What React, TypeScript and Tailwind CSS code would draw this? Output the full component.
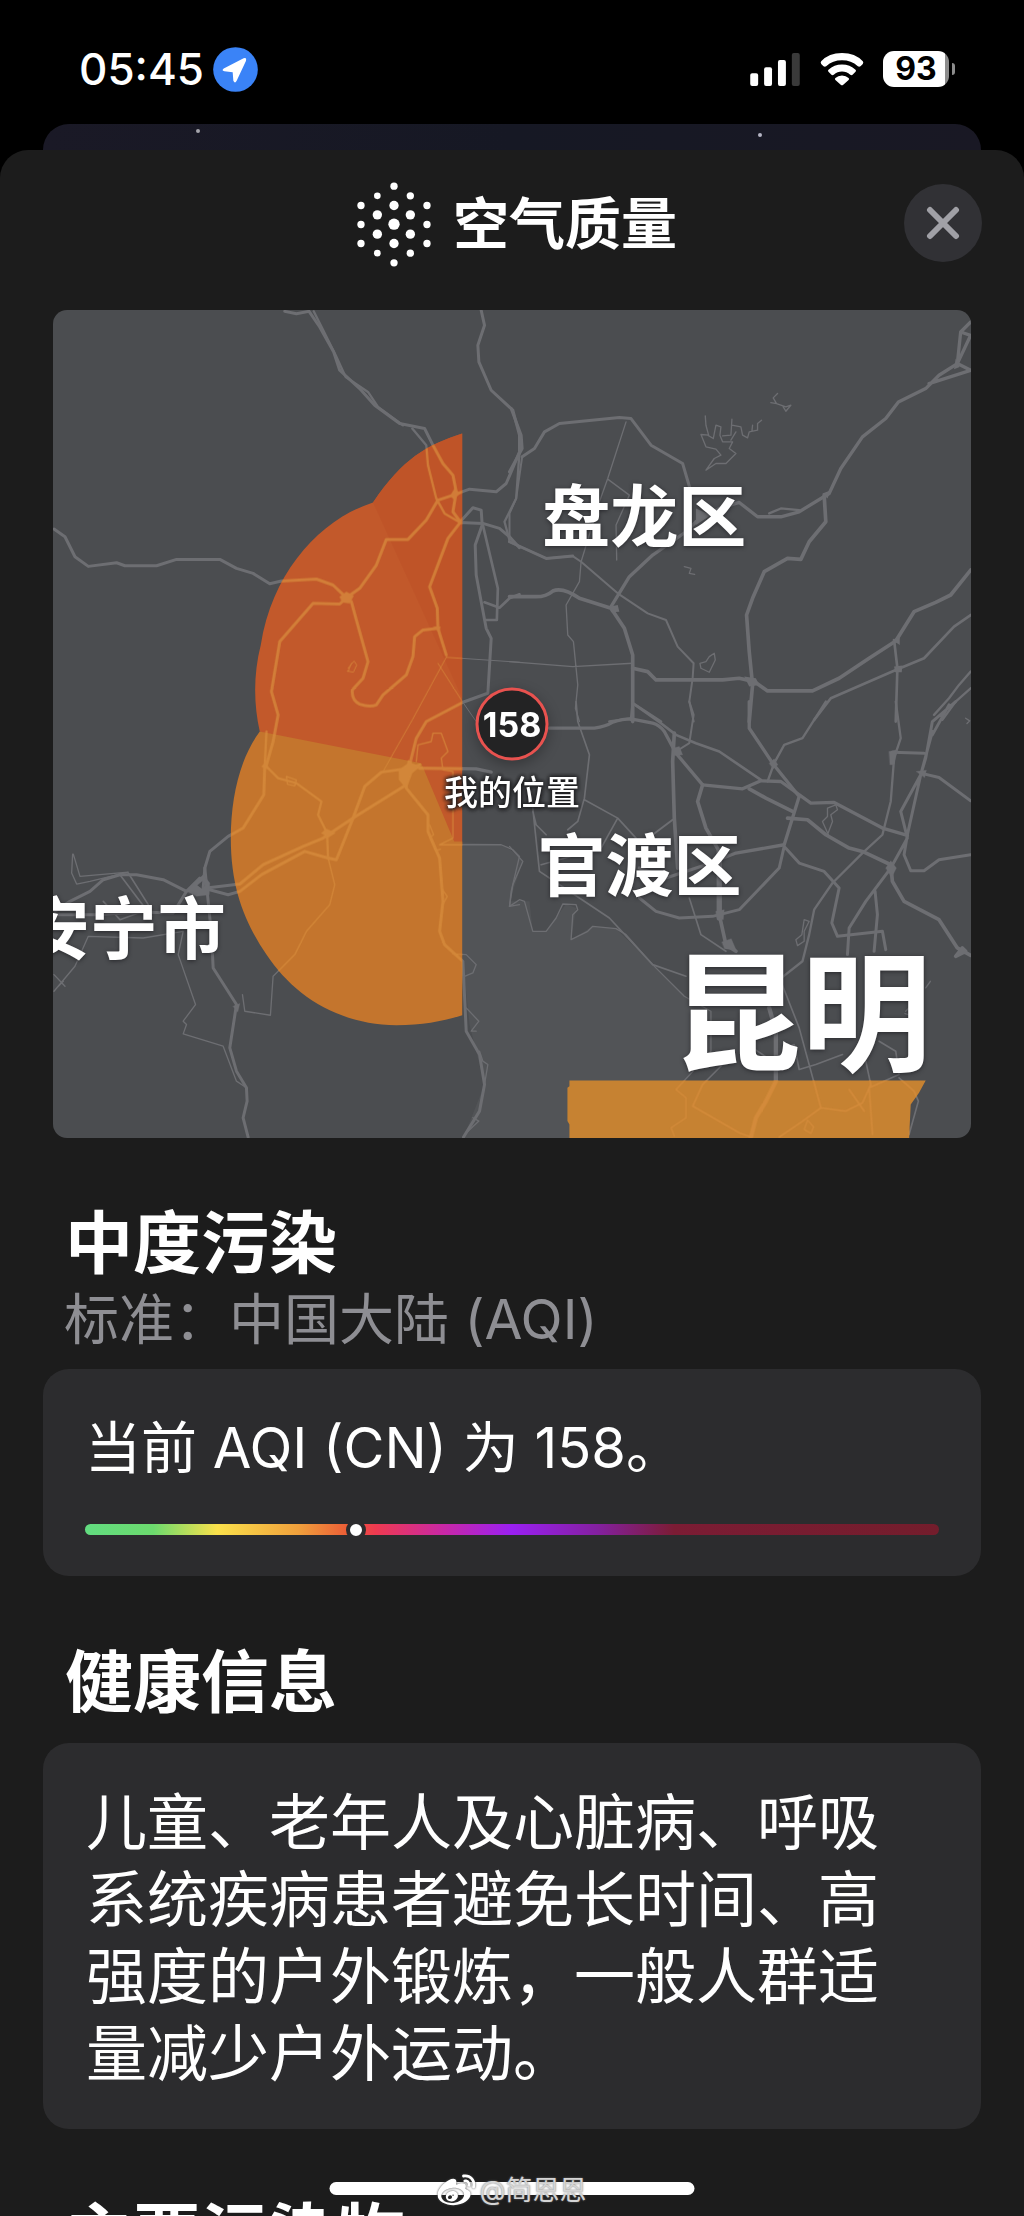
import React from "react";
import { FaWeibo } from "react-icons/fa";

/* Roads are grouped by map tile; every tile is drawn at three units per pixel. */
function Roads() {
  return (
    <g fill="none" stroke="currentColor" strokeLinejoin="round" strokeLinecap="round">
      <g>
        <g strokeWidth="9">
          <path d="M735 58L770 65L808 58L840 105L882 180L900 235L960 290L1005 340L1080 395L1155 410L1180 460L1210 515L1240 550L1250 600L1240 660L1262 690" />
          <path d="M822 58L848 110L888 190L918 255L985 300L1015 345L1090 400" strokeWidth="7" />
          <path d="M1118 410L1160 460L1165 520L1190 620L1215 665L1262 692" strokeWidth="7" />
          <path d="M1325 55L1335 100L1315 160L1318 210L1355 295L1420 355L1440 430L1440 480L1415 540L1400 575L1370 600L1290 592L1240 610L1195 625L1160 685L1105 743L1040 743L1010 820L960 890L920 918L880 880L830 862L725 868L690 876L640 845L590 830L540 803L410 803L350 822L255 822L230 813L145 824L105 795L75 735L42 712" />
          <path d="M920 918L900 937L820 935L720 1050L695 1200L715 1270L700 1350L680 1420" />
          <path d="M935 930L950 985L985 1110L970 1160L938 1195Q935 1225 960 1238Q990 1248 1010 1240L1030 1210L1100 1150L1120 1095L1125 1035L1150 1015L1195 1010L1193 950L1170 885L1225 740L1262 692L1330 695L1380 710L1410 735L1440 768" />
          <path d="M1195 1010L1220 1090" />
          <path d="M1262 690L1300 648L1325 655L1328 700L1307 760L1310 850L1325 930L1340 1010L1355 1040L1345 1205L1270 1232L1160 1290L1130 1340L1110 1420" />
          <path d="M1330 700L1375 890L1372 985L1340 985M1335 932L1380 948L1410 920L1440 908" strokeWidth="8" />
          <path d="M1440 480L1430 620L1395 690L1410 745" strokeWidth="7" />
        </g>
        <g strokeWidth="3">
          <path d="M1220 1097L1440 1112M1220 1097L1118 1285L1030 1440M1195 1115L1265 1225L1310 1290" />
          <path d="M925 1130l18 -22l8 12l-10 22l-18 -4M935 1115l-10 25" />
        </g>
        <path fill="currentColor" d="M900 915L920 900L942 912L930 935L908 932ZM1232 612L1245 590L1262 605L1242 622ZM1182 1005l20 0l-2 18Z" />
      </g>
      <g transform="translate(1410 0)">
        <g strokeWidth="11">
          <path d="M5 350L35 430L38 470L0 540M38 495L75 470L105 420L150 395L330 377L365 380L425 460L520 515L542 590" strokeWidth="9" />
          <path d="M38 495L20 620L0 665L0 750L110 800L190 793L215 810L325 905L415 965L470 985L505 1065L553 1115L550 1160L540 1230L553 1290" strokeWidth="6" />
          <path d="M0 750L110 800L190 793" strokeWidth="9" />
          <path d="M0 915L80 915Q110 915 130 898Q160 885 210 920L305 950L345 1010L370 1090L370 1290" />
          <path d="M305 945L360 855L430 790L530 720L560 690L630 650L690 632L745 675L815 675L870 660L960 605L995 530L1060 435L1130 380L1168 330L1250 290L1290 250L1345 215L1355 120L1385 90M1355 120L1385 130L1345 215L1385 235L1260 275" strokeWidth="10" />
          <path d="M780 665L815 650L870 655" strokeWidth="7" />
          <path d="M945 610L950 690L900 750L875 803L835 800L765 840L730 920L712 970L720 1080L730 1180L720 1290" />
          <path d="M370 1130L415 1140L440 1165L640 1165L690 1160L735 1170L775 1198L910 1198L990 1160L1080 1100L1160 1048L1215 960L1280 932L1325 910L1385 835" />
          <path d="M915 1285L965 1220L1160 1135L1245 1100L1335 1005L1385 970M1155 1045L1165 1130L1160 1290" strokeWidth="8" />
          <path d="M1385 1140L1350 1180L1320 1220L1275 1270M1385 1190L1340 1230L1300 1285" strokeWidth="7" />
          <path d="M370 1235L455 1290M300 1290L370 1280" strokeWidth="8" />
        </g>
        <g strokeWidth="4">
          <path d="M350 390L295 560L270 630L215 810L210 870L170 940L175 1030L192 1050L205 1180L198 1250L210 1290M295 562L360 610L320 700L322 805M0 1110L190 1125L370 1115" />
          <path d="M588 372L590 400L598 430L575 428L590 465L620 472L635 490L615 500L590 535L620 515L650 515L680 485L660 470L670 450L640 450L632 430L635 405L620 400L612 440L595 430M668 382L665 430L640 432M668 400L695 405L700 430L715 438L720 420L745 415L745 395L757 385M730 400L728 418M665 445L680 420" />
          <path d="M805 305L792 318L802 335L785 332M802 335L830 345L845 340L830 358L822 345M525 825L545 830L540 845L556 848" />
          <path d="M615 1085L618 1105L600 1142L575 1130L572 1115L590 1110L600 1095Z" />
        </g>
        <path fill="currentColor" stroke="none" d="M300 945L325 940L330 960L305 962ZM705 1155L740 1160L750 1180L720 1185ZM1155 1125L1180 1122L1178 1142L1158 1142ZM1150 1045L1172 1035L1172 1060ZM940 605L965 595L955 620ZM1340 200L1352 225L1335 232ZM560 650L605 670L560 700Z" />
      </g>
      <g transform="translate(0 1230)">
        <g strokeWidth="9">
          <path d="M680 90L675 190L715 230L770 245L845 300L835 340L862 395L865 470" strokeWidth="7" />
          <path d="M865 470L885 550L870 610L800 690L765 760L700 825L692 942L615 930L608 880" strokeWidth="4" />
          <path d="M675 190L672 280L610 380L565 405L510 450L495 500L490 560L565 580L600 570L665 520L795 450L865 470L890 475L940 350L975 255L1025 212L1110 200L1140 190" />
          <path d="M500 560L600 548L670 490L790 435L850 410L940 350L1100 250L1108 180" />
          <path d="M440 570L370 535L290 520L240 520L190 535L150 570L90 600L45 630M480 530L440 570L400 635L300 632L170 640L42 640" />
          <path d="M495 500L515 700L520 800L590 910L570 1040L590 1110L620 1160L622 1200L610 1250L625 1308" />
          <path d="M1100 200L1100 260L1165 340L1165 390L1200 470L1210 600L1200 690L1215 730L1270 780L1280 990L1320 1060L1335 1150L1320 1230L1272 1308" />
          <path d="M1140 200L1310 202L1355 212" strokeWidth="10" />
          <path d="M240 520L300 600L335 645M265 515L325 610M190 600L240 655L310 630" strokeWidth="5" />
        </g>
        <g strokeWidth="4">
          <path d="M98 458L95 515L110 548L150 540L265 512L120 525L100 458M42 870L105 795L145 705L310 710L430 690L415 760L467 910L430 960L440 970L430 998L550 1035L590 1140L620 1160M42 820L75 855M50 860L70 840" />
          <path d="M1130 180L1135 130L1175 120L1180 95L1205 95L1225 150L1205 170L1210 205L1240 210L1240 410L1200 430L1385 430L1420 445L1440 465L1415 570L1410 615L1440 610" />
          <path d="M740 225l30 10l-5 18l-22 -5zM1170 370l12 30l-12 8l18 40l15 -5M1205 560l18 25l-12 22M1240 758L1280 760L1310 790L1300 815L1275 825M1280 920L1318 960L1295 990L1310 990M1320 1050L1330 1080L1345 1090L1330 1180M1300 1250L1318 1260L1275 1300" />
        </g>
        <path fill="currentColor" d="M1078 205L1110 182L1142 195L1118 215L1100 262L1078 235ZM845 395L860 382L887 395L866 408ZM665 195L678 182L690 205ZM580 915l20 -8l-6 25Z" />
        <path fill="currentColor" fillRule="evenodd" d="M440 570L490 520L510 545L508 580L470 585ZM472 552L488 538L498 550L486 562Z" />
      </g>
      <g transform="translate(1410 1230)">
        <g strokeWidth="11">
          <path d="M120 80L255 80Q290 75 310 62Q340 52 365 52L430 65Q450 70 465 90L500 155L580 250L700 262L755 238L815 240L905 305L975 303L1120 380L1195 402" strokeWidth="10" />
          <path d="M370 5L365 55M370 5L455 65L500 100L560 125L630 150L755 235" strokeWidth="8" />
          <path d="M495 95L490 180L495 350L505 500M580 250L565 300L590 380L630 450L630 640L650 730L680 750" />
          <path d="M720 0L720 80L790 185L870 285L850 350L825 430L680 455L590 490L470 530L390 500" strokeWidth="10" />
          <path d="M630 450L630 650" strokeWidth="16" />
          <path d="M720 262L770 290L850 330M835 350L895 355L950 400L1020 440L1060 450L1145 490L1150 540L1185 600L1290 655L1345 740L1385 762M1340 765L1360 740L1370 750Z" />
          <path d="M825 435L870 485L945 510L990 560L968 665L985 705L1120 690L1130 745M825 435L810 500L690 625L610 645L510 650L440 630L390 590" strokeWidth="9" />
          <path d="M950 0L880 110L825 130L795 185L775 240M1160 0L1175 110L1155 170L1145 300L1120 400L1060 455L970 545L915 625L900 700L880 780L810 835" strokeWidth="7" />
          <path d="M1340 0L1270 60L1250 170L1235 220L1175 330L1195 410L1145 500L1070 600L1020 680L1015 760M1270 90L1235 220L1195 400L1185 460L1205 508L1245 508L1290 475L1385 460M1150 152L1245 155M1235 215L1290 228L1385 298M1098 570L1105 640L1095 750M1320 10L1270 100" strokeWidth="9" />
          <path d="M540 0L553 40L540 125L500 150M430 400L490 355" strokeWidth="6" />
          <path d="M780 920L800 990L800 1140L770 1200L740 1250L725 1308" strokeWidth="13" />
        </g>
        <g strokeWidth="5">
          <path d="M200 0L205 60L240 160L225 290L205 360L175 385M70 330L80 370L110 400M225 295L325 350L380 410M325 350L275 440L95 490M65 270L75 370L90 510L120 530L210 590L300 650L430 790L530 825M540 590L575 700L650 750" />
          <path d="M815 840L870 980L935 1220L1010 1230L1060 1205L1085 1150L1070 1080M830 1040L855 1030L870 1105L920 1090L1000 1060M730 1040L790 1080M1110 1020L1160 1050L1170 1120L1080 1160L1090 1300M550 1215L690 1295L725 1308M550 1215L580 1150L640 1090M810 1308L880 1260L935 1220M1170 1130L1215 1170L1228 1200L1200 1300M1020 1165L1065 1230" />
        </g>
        <g strokeWidth="4">
          <path d="M0 435L40 480L10 550L0 615L30 595L45 600L70 690L110 690L140 650L160 608L200 610L205 625L190 640L185 715L235 690L250 675L320 682L350 700L430 790L525 885L605 930L605 1050L570 1090L500 1165L530 1190L530 1250L485 1280L495 1305" />
          <path d="M955 320L980 310L985 325L965 340L970 360L955 400L960 405L940 360L955 345ZM885 655L900 660L885 690L885 720L865 733L860 715L878 700ZM1190 930l18 -18l-5 30l-15 -5M1250 860l14 -20M885 1285l10 -28l18 20l-8 20zM1370 50l12 8l-8 8" />
        </g>
        <path fill="currentColor" d="M780 185L795 172L806 190L792 202ZM1130 500L1145 478L1162 500L1148 528ZM620 630L645 625L642 655L622 648ZM490 140L510 135L520 160L495 162ZM1140 150L1165 145L1155 190L1143 190ZM1222 210l30 -4l-5 22ZM638 722l28 -10l15 35l-35 -5Z" />
      </g>
    </g>
  );
}

const UPPER =
  "M1268 425C1160 460 1090 500 1000 632C850 680 700 830 663 1060C640 1150 642 1240 660 1320L1100 1500L1200 1660H1268Z";
const LOWER =
  "M660 1320C600 1400 573 1520 573 1640C573 1800 620 1900 680 1990C760 2110 890 2200 1070 2202C1150 2202 1210 2190 1268 2172V1650H1244L1145 1415Z";
const SOUTH = "M1590 2368H2660L2640 2405L2615 2440L2610 2545H1590V2500L1584 2490V2390L1590 2385Z";

function MapCanvas() {
  return (
    <svg viewBox="0 0 919 829" className="block h-auto w-full" aria-hidden="true">
      <defs>
        <clipPath id="zones">
          <path d={UPPER} />
          <path d={LOWER} />
          <path d={SOUTH} />
        </clipPath>
      </defs>
      <rect width="919" height="829" fill="#4b4d50" />
      <g transform="translate(-13 -18) scale(0.33333)">
        <path
          fill="#525457"
          d="M1200 1650L1380 1658L1420 1680L1450 1710L1410 1830L1470 1830L1480 1920L1520 1920L1580 1838L1610 1850L1595 1945L1660 1905L1730 1912L1840 2020L1935 2115L2015 2160V2280L1910 2395L1940 2480L1895 2545H1270L1335 2380L1290 2200L1270 2010L1200 1930Z"
        />
        <g className="text-[#6d6e72]">
          <Roads />
        </g>
        <path d={UPPER} fill="#c2592b" />
        <path d="M1268 425C1160 460 1090 500 1000 632L1268 1220Z" fill="#bd5328" opacity="0.7" />
        <path d={LOWER} fill="#c4752d" />
        <path d={SOUTH} fill="#c68232" />
        <g clipPath="url(#zones)" className="text-[#d98f3f]" opacity="0.7">
          <Roads />
        </g>
      </g>
    </svg>
  );
}

const PLACE =
  "absolute -translate-x-1/2 -translate-y-1/2 whitespace-nowrap font-semibold leading-none text-white [text-shadow:0_1px_4px_rgba(30,30,34,0.8)]";

function AirMap() {
  return (
    <div className="relative mx-[53px] overflow-hidden rounded-[14px]">
      <MapCanvas />
      <span className={`${PLACE} left-[64.4%] top-[25%] text-[68px]`}>盘龙区</span>
      <span className={`${PLACE} left-[63.9%] top-[67.2%] text-[68px]`}>官渡区</span>
      <span className={`${PLACE} left-[7.7%] top-[74.7%] text-[68px]`}>安宁市</span>
      <span className={`${PLACE} left-[81.5%] top-[85%] text-[130px]`}>昆明</span>
      <span className="absolute left-1/2 top-1/2 flex size-[73px] -translate-x-1/2 -translate-y-1/2 items-center justify-center rounded-full border-3 border-[#e8524f] bg-[#232324] text-[34px] font-bold text-white shadow-[0_4px_14px_rgba(0,0,0,0.3)]">
        158
      </span>
      <span className="absolute left-1/2 top-[58.3%] -translate-x-1/2 -translate-y-1/2 whitespace-nowrap text-[34px] font-medium leading-none text-white [text-shadow:0_0_4px_#1c1c1e,0_0_4px_#1c1c1e,0_1px_5px_#1c1c1e]">
        我的位置
      </span>
    </div>
  );
}

function StatusBar() {
  return (
    <header className="flex h-[124px] shrink-0 items-center justify-between pt-[14px] pl-[79px] pr-[69px] text-white">
      <div className="flex items-center gap-[9px]">
        <time className="text-[44px] font-medium leading-none">05:45</time>
        <svg viewBox="636 138 135 136" className="size-[45px]" aria-label="定位">
          <circle cx="703.500" cy="206" r="67.500" fill="#3a83f7" />
          <path
            d="M668 203L728 172Q738 168 735 180L707 240Q702 250 697 240L695 214L670 211Q660 209 668 203Z"
            fill="#fff"
          />
        </svg>
      </div>
      <div className="flex items-center">
        <svg viewBox="714 152 150 106" className="h-[35px] w-[50px]" aria-label="信号">
          <rect x="714" y="216" width="24" height="39" rx="6" fill="#fff" />
          <rect x="756" y="198" width="24" height="57" rx="6" fill="#fff" />
          <rect x="798" y="176" width="24" height="79" rx="6" fill="#fff" />
          <rect x="840" y="155" width="24" height="100" rx="6" fill="#3a3a3a" />
        </svg>
        <svg viewBox="924 152 132 106" className="ml-[20px] h-[35px] w-[44px]" aria-label="无线网络">
          <path
            fill="#fff"
            d="M990 155Q1030 155 1053 180Q1056 184 1053 188L1046 195Q1042 198 1038 195Q1018 177 990 177Q962 177 942 195Q938 198 934 195L927 188Q924 184 927 180Q950 155 990 155ZM990 190Q1014 190 1031 206Q1034 209 1031 212L1022 221Q1019 224 1015 221Q1004 211 990 211Q976 211 965 221Q961 224 958 221L949 212Q946 209 949 206Q966 190 990 190ZM990 223Q1002 223 1010 231Q1013 234 1010 237L993 252Q990 254 987 252L970 237Q967 234 970 231Q978 223 990 223Z"
          />
        </svg>
        <div className="ml-[19px] flex items-center gap-[3px]">
          <div className="flex h-[36px] w-[66px] items-center justify-center rounded-[11px] bg-[linear-gradient(90deg,#fff_94%,#8c8c8c_94%)] text-[32px] font-bold leading-[36px] text-black">
            93
          </div>
          <div className="h-[12px] w-[3px] rounded-r-full bg-[#8c8c8c]" />
        </div>
      </div>
    </header>
  );
}

const DOTS: [number, number, number][] = [
  [1184, 557, 11], [1134, 586, 10], [1233, 586, 11], [1085, 615, 11], [1184, 615, 14], [1283, 615, 11],
  [1134, 643, 14], [1233, 643, 14], [1085, 672, 11], [1184, 671, 17], [1283, 672, 11], [1134, 701, 14],
  [1233, 701, 14], [1085, 729, 11], [1184, 729, 14], [1283, 729, 11], [1134, 758, 10], [1233, 758, 11],
  [1184, 787, 11],
];

function SheetHeader() {
  return (
    <div className="relative mb-[12px] flex h-[148px] items-center justify-center gap-[22px] pl-[10px]">
      <svg viewBox="1073 545 222 254" className="h-[85px] w-[74px]" fill="#fff" aria-hidden="true">
        {DOTS.map(([x, y, r]) => (
          <circle key={`${x}-${y}`} cx={x} cy={y} r={r} />
        ))}
      </svg>
      <h1 className="text-[56px] font-semibold leading-[64px]">空气质量</h1>
      <button
        type="button"
        aria-label="关闭"
        className="absolute right-[42px] top-[34px] flex size-[78px] items-center justify-center rounded-full bg-[#313135]"
      >
        <svg viewBox="0 0 34 34" className="size-[34px]" stroke="#a0a0a6" strokeWidth="6" strokeLinecap="round">
          <path d="M4 4L30 30M30 4L4 30" />
        </svg>
      </button>
    </div>
  );
}

function AqiScale({ value }: { value: number }) {
  return (
    <div
      role="meter"
      aria-label="AQI"
      aria-valuemin={0}
      aria-valuemax={500}
      aria-valuenow={value}
      className="relative mt-[38px] h-[11px] rounded-full bg-[linear-gradient(90deg,#62dc80_0%,#6cdb6e_8%,#fbe14b_15.5%,#f0a03c_25%,#ec5a36_31%,#ef3a50_34%,#c928a6_42%,#9a20f2_50%,#8420a0_60%,#7c1c34_69%,#741d2c_100%)]"
    >
      <span
        className="absolute top-1/2 size-[20px] -translate-x-1/2 -translate-y-1/2 rounded-full border-4 border-[#2c2c2e] bg-white"
        style={{ left: `${(value / 497) * 100}%` }}
      />
    </div>
  );
}

const HEADING = "mx-[65px] text-[68px] font-bold leading-[80px]";
const CARD = "mx-[43px] rounded-[26px] bg-[#2c2c2e]";

export default function App() {
  return (
    <div
      lang="zh-CN"
      className="relative flex h-screen flex-col overflow-hidden bg-black text-white [font-family:Inter,'Noto_Sans_CJK_SC',sans-serif]"
    >
      <StatusBar />
      <div className="relative mx-[43px] h-[26px] shrink-0 rounded-t-[26px] bg-[linear-gradient(90deg,#1a1926,#161824_50%,#191824)]">
        <span className="absolute left-[16.3%] top-[5px] size-[4px] rounded-full bg-[#a5a5ac]" />
        <span className="absolute left-[76.2%] top-[9px] size-[4px] rounded-full bg-[#b5b5c4]" />
      </div>
      <main className="min-h-0 flex-1 overflow-hidden rounded-t-[28px] bg-[#1c1c1c]">
        <SheetHeader />
        <AirMap />
        <section className="pt-[65px]">
          <h2 className={HEADING}>中度污染</h2>
          <p className="mx-[64px] text-[55px] leading-[72px] text-[#8e8e93]">标准：中国大陆 (AQI)</p>
          <div className={`${CARD} mt-[14px] px-[42px] py-[41px]`}>
            <p className="text-[56px] leading-[76px]">当前 AQI (CN) 为 158。</p>
            <AqiScale value={158} />
          </div>
        </section>
        <section className="pt-[66px]">
          <h2 className={HEADING}>健康信息</h2>
          <div className={`${CARD} mt-[21px] pb-[36px] pl-[43px] pr-[51px] pt-[42px]`}>
            <p className="text-[61px] leading-[77px]">
              儿童、老年人及心脏病、呼吸系统疾病患者避免长时间、高强度的户外锻炼，一般人群适量减少户外运动。
            </p>
          </div>
        </section>
        <section className="pt-[66px]">
          <h2 className={HEADING}>主要污染物</h2>
        </section>
      </main>
      <div className="absolute bottom-[21px] left-1/2 h-[13px] w-[365px] -translate-x-1/2 rounded-full bg-white" />
      <div className="absolute bottom-[6px] left-1/2 flex -translate-x-1/2 items-center gap-[4px] text-[#d4d4d4]">
        <FaWeibo className="size-[38px] text-white [filter:drop-shadow(0_0_1px_#444)]" />
        <span className="text-[27px] leading-[32px] [text-shadow:0_0_2px_#777]">@简恩恩</span>
      </div>
    </div>
  );
}
